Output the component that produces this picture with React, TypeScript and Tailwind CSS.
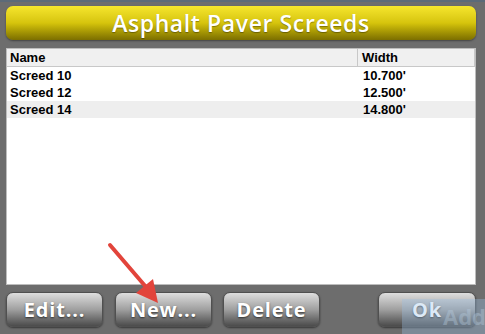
import React from "react";

type Screed = {
    name: string;
    width: string;
};

const screeds: Screed[] = [
    { name: "Screed 10", width: "10.700'" },
    { name: "Screed 12", width: "12.500'" },
    { name: "Screed 14", width: "14.800'" },
];

const Btn: React.FC<{ label: string; className?: string }> = ({ label, className }) => (
    <button
        type="button"
        className={`h-[35px] rounded-[7px] border border-[#505050] bg-gradient-to-b from-[#dedede] via-[#a0a0a0] to-[#4c4c4c] text-white text-[20px] font-bold leading-none tracking-[0.8px] [text-shadow:0_1px_2px_rgba(0,0,0,0.6)] shadow-[0_1px_2px_rgba(0,0,0,0.5)] ${className ?? ""}`}
        style={{ fontFamily: '"Open Sans", sans-serif' }}
    >
        {label}
    </button>
);

export default function App() {
    return (
        <div className="relative w-[485px] h-[334px] overflow-hidden bg-[#6d6d6d] flex flex-col pl-[6px] pr-[9px] pt-[6px] border-t-[2px] border-[#5c6a78]">
            <div
                className="h-[34px] -mt-[2px] shrink-0 rounded-[7px] bg-gradient-to-b from-[#f6e62c] via-[#d6c40c] to-[#7c6f00] flex items-center justify-center text-white text-[23px] font-semibold tracking-[0.6px] [text-shadow:0_1px_1px_rgba(0,0,0,0.35)] shadow-[0_1px_2px_rgba(0,0,0,0.4)]"
                style={{ fontFamily: '"Open Sans", sans-serif' }}
            >
                Asphalt Paver Screeds
            </div>

            <div
                className="mt-[8px] h-[237px] shrink-0 bg-white border border-[#bdbdbd] flex flex-col text-[13px] font-bold text-black"
                style={{ fontFamily: '"Liberation Sans", Arial, sans-serif' }}
            >
                <div className="h-[18px] flex bg-[#f0f0f0] border-b border-[#c8c8c8]">
                    <div className="w-[351px] pl-[3px] flex items-center border-r border-[#c8c8c8]">Name</div>
                    <div className="flex-1 pl-[4px] flex items-center border-r border-[#c8c8c8]">Width</div>
                </div>
                {screeds.map((s, i) => (
                    <div key={s.name} className={`h-[17px] flex items-center ${i === 2 ? "bg-[#eeeeee]" : ""}`}>
                        <div className="w-[351px] pl-[3px]">{s.name}</div>
                        <div className="flex-1 pl-[5px]">{s.width}</div>
                    </div>
                ))}
            </div>

            <div className="mt-[7px] flex">
                <Btn label="Edit..." className="w-[97px]" />
                <Btn label="New..." className="w-[97px] ml-[12px]" />
                <Btn label="Delete" className="w-[97px] ml-[11px]" />
                <div className="flex-1" />
                <Btn label="Ok" className="w-[98px]" />
            </div>

            <div className="absolute left-[402px] top-[297px] w-[83px] h-[37px] bg-[#9cc0e6]/35" />
            <div
                className="absolute left-[443px] top-[303px] text-[22px] font-bold leading-none text-[#b8cde0]/40"
                style={{ fontFamily: '"Open Sans", sans-serif' }}
            >
                Add
            </div>

            <svg className="absolute left-0 top-0" width="485" height="334" viewBox="0 0 485 334">
                <line x1="110" y1="243" x2="146" y2="285" stroke="#e2443b" strokeWidth="4" strokeLinecap="round" />
                <polygon points="158,301 136,291 153,277" fill="#e2443b" />
            </svg>
        </div>
    );
}
